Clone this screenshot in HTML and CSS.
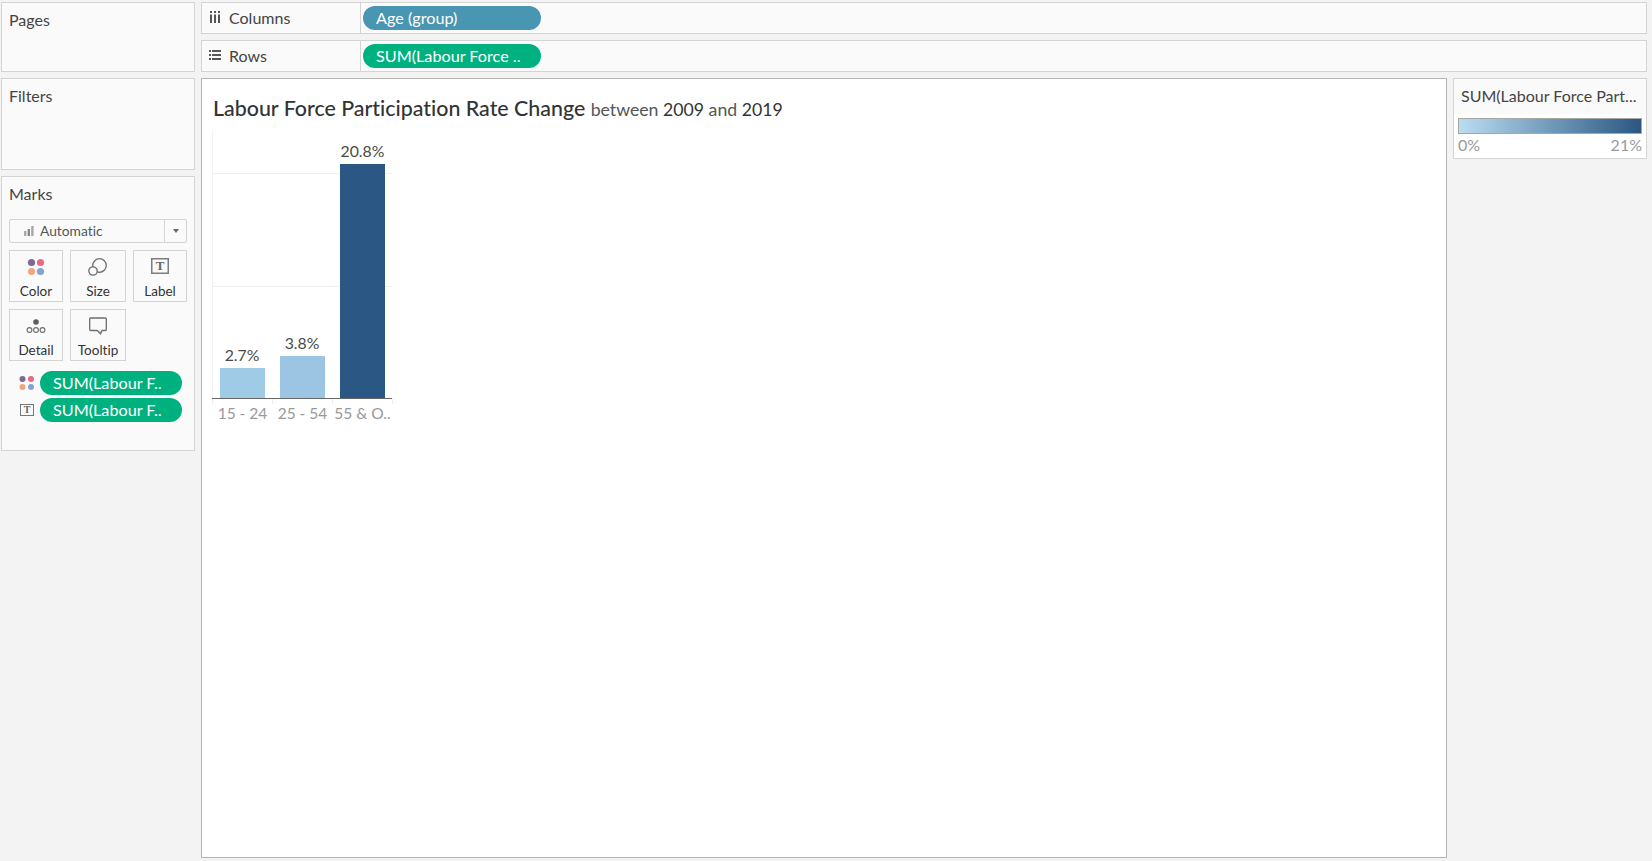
FILE: index.html
```html
<!DOCTYPE html>
<html lang="en">
<head>
    <meta charset="UTF-8">
    <title>Labour Force Participation Rate Change</title>
    <link rel="stylesheet" href="styles.css">
</head>
<body>
    <div class="app">
        <!-- Left side cards -->
        <div class="sidebar">
            <div class="panel pages-panel"><div class="panel-title">Pages</div></div>
            <div class="panel filters-panel"><div class="panel-title">Filters</div></div>
            <div class="panel marks-panel">
                <div class="panel-title">Marks</div>
                <div class="mark-type">
                    <div class="mark-type-name">
                        <svg class="mark-type-icon" width="12" height="10" viewBox="0 0 12 10">
                            <rect x="1" y="5" width="2.4" height="5" fill="#a8a8a8"/>
                            <rect x="4.6" y="3" width="2.4" height="7" fill="#8a8a8a"/>
                            <rect x="8.2" y="0" width="2.4" height="10" fill="#a8a8a8"/>
                        </svg>
                        Automatic
                    </div>
                    <div class="mark-type-arrow"><span class="arrow"></span></div>
                </div>
                <div class="mark-cards">
                    <div class="mark-card">
                        <svg width="18" height="18" viewBox="0 0 18 18">
                            <circle cx="4.5" cy="4.5" r="3.6" fill="#7b6a94"/>
                            <circle cx="13.5" cy="4.5" r="3.6" fill="#ea6a80"/>
                            <circle cx="4.5" cy="13.5" r="3.6" fill="#f2a67c"/>
                            <circle cx="13.5" cy="13.5" r="3.6" fill="#7fa6d0"/>
                        </svg>
                        <span>Color</span>
                    </div>
                    <div class="mark-card">
                        <svg width="20" height="18" viewBox="0 0 20 18">
                            <circle cx="11.5" cy="7.5" r="6.8" fill="none" stroke="#6d6d6d" stroke-width="1.3"/>
                            <circle cx="5" cy="13" r="4.2" fill="#fafafa" stroke="#6d6d6d" stroke-width="1.3"/>
                        </svg>
                        <span>Size</span>
                    </div>
                    <div class="mark-card">
                        <svg width="18" height="16" viewBox="0 0 18 16">
                            <rect x="0.75" y="0.75" width="16.5" height="14.5" fill="none" stroke="#7d7d7d" stroke-width="1.5"/>
                            <text x="9" y="12" class="t-glyph">T</text>
                        </svg>
                        <span>Label</span>
                    </div>
                    <div class="mark-card">
                        <svg width="20" height="18" viewBox="0 0 20 18">
                            <circle cx="10" cy="5" r="2.8" fill="#5f5f5f"/>
                            <circle cx="3.5" cy="13" r="2.4" fill="none" stroke="#6d6d6d" stroke-width="1.1"/>
                            <circle cx="10" cy="13" r="2.4" fill="none" stroke="#6d6d6d" stroke-width="1.1"/>
                            <circle cx="16.5" cy="13" r="2.4" fill="none" stroke="#6d6d6d" stroke-width="1.1"/>
                        </svg>
                        <span>Detail</span>
                    </div>
                    <div class="mark-card">
                        <svg width="18" height="18" viewBox="0 0 18 18">
                            <path d="M1.7 1h14.6a1 1 0 0 1 1 1v10.500a1 1 0 0 1-1 1H13l-1.500 3.300-3.200-3.300H1.700a1 1 0 0 1-1-1V2a1 1 0 0 1 1-1z" fill="none" stroke="#6d6d6d" stroke-width="1.3"/>
                        </svg>
                        <span>Tooltip</span>
                    </div>
                </div>
                <div class="mark-row">
                    <svg width="16" height="16" viewBox="0 0 16 16">
                        <circle cx="3.500" cy="4" r="3" fill="#7b6a94"/>
                        <circle cx="12" cy="4" r="3" fill="#ea6a80"/>
                        <circle cx="3.500" cy="12" r="3" fill="#f2a67c"/>
                        <circle cx="12" cy="12" r="3" fill="#7fa6d0"/>
                    </svg>
                    <div class="pill pill-green">SUM(Labour F..</div>
                </div>
                <div class="mark-row">
                    <svg width="14" height="12" viewBox="0 0 14 12">
                        <rect x="0.500" y="0.500" width="13" height="11" fill="none" stroke="#777" stroke-width="1"/>
                        <text x="7" y="9" class="t-glyph t-small">T</text>
                    </svg>
                    <div class="pill pill-green">SUM(Labour F..</div>
                </div>
            </div>
        </div>

        <div class="main">
            <!-- Shelves -->
            <div class="shelf">
                <div class="shelf-name">
                    <svg width="12" height="12" viewBox="0 0 12 12">
                        <path d="M1 0h2v2H1zM5 0h2v2H5zM9 0h2v2H9zM1 3.500h2V12H1zM5 3.500h2V12H5zM9 3.500h2V12H9z" fill="#555"/>
                    </svg>
                    Columns
                </div>
                <div class="shelf-pills"><div class="pill pill-blue">Age (group)</div></div>
            </div>
            <div class="shelf">
                <div class="shelf-name">
                    <svg width="12" height="12" viewBox="0 0 12 12">
                        <path d="M0 1h2v2H0zM3 1h9v2H3zM0 5h2v2H0zM3 5h9v2H3zM0 9h2v2H0zM3 9h9v2H3z" fill="#555"/>
                    </svg>
                    Rows
                </div>
                <div class="shelf-pills"><div class="pill pill-green">SUM(Labour Force ..</div></div>
            </div>

            <div class="content">
                <div class="canvas">
                    <h1 class="chart-title">Labour Force Participation Rate Change <small>between <b>2009</b> and <b>2019</b></small></h1>
                    <svg class="chart" width="200" height="300" viewBox="0 0 200 300">
                        <path d="M0.500 0V271M0 42.500H180M0 155.500H180" stroke="#f0f0f0" fill="none"/>
                        <rect x="8" y="237" width="45" height="30" fill="#a0cbe6"/>
                        <rect x="68" y="225" width="45" height="42" fill="#9bc5e3"/>
                        <rect x="128" y="33" width="45" height="234" fill="#2a5783"/>
                        <path d="M0 267.500H180" stroke="#666" fill="none"/>
                        <path d="M0.500 268V273M60.500 268V273M120.500 268V273M180.500 268V273" stroke="#ececec" fill="none"/>
                        <text class="bar-label" x="30" y="229.500">2.7%</text>
                        <text class="bar-label" x="90" y="217.500">3.8%</text>
                        <text class="bar-label" x="150.500" y="26">20.8%</text>
                        <text class="axis-label" x="30.500" y="288">15 - 24</text>
                        <text class="axis-label" x="90.500" y="288">25 - 54</text>
                        <text class="axis-label" x="150.500" y="288">55 &amp; O..</text>
                    </svg>
                </div>
                <div class="legend">
                    <div class="legend-title">SUM(Labour Force Part...</div>
                    <div class="legend-body">
                        <div class="legend-ramp"></div>
                        <div class="legend-range"><span>0%</span><span>21%</span></div>
                    </div>
                </div>
            </div>
        </div>
    </div>
</body>
</html>
```

FILE: styles.css
```css
* {
    margin: 0;
    padding: 0;
    box-sizing: border-box;
}

body {
    font-family: 'Lato', sans-serif;
    font-size: 15px;
    font-variant-ligatures: none;
    color: #444;
    background-color: #F3F3F3;
    height: 861px;
    overflow: hidden;
}

.app {
    display: flex;
    gap: 6px;
    height: 861px;
    padding: 2px 5px 3px 1px;
}

/* Left cards */
.sidebar {
    width: 194px;
    display: flex;
    flex-direction: column;
    gap: 6px;
}

.panel {
    background-color: #FAFAFA;
    border: 1px solid #D4D4D4;
    padding: 0 7px;
}

.panel-title {
    font-size: 16px;
    line-height: 20px;
    padding-top: 7px;
}

.pages-panel {
    height: 70px;
}

.filters-panel {
    height: 92px;
}

.marks-panel {
    height: 275px;
}

.mark-type {
    display: flex;
    height: 24px;
    margin-top: 15px;
    border: 1px solid #D4D4D4;
    border-radius: 2px;
    background-color: #FAFAFA;
}

.mark-type-name {
    flex: 1;
    display: flex;
    align-items: center;
    gap: 5px;
    padding-left: 13px;
    padding-bottom: 1px;
    font-size: 13.800px;
    color: #555;
}

.mark-type-arrow {
    width: 22px;
    border-left: 1px solid #D4D4D4;
    display: flex;
    align-items: center;
    justify-content: center;
}

.arrow {
    width: 0;
    height: 0;
    border-left: 3.500px solid transparent;
    border-right: 3.500px solid transparent;
    border-top: 4px solid #666;
}

.mark-cards {
    display: grid;
    grid-template-columns: 54px 56px 54px;
    grid-auto-rows: 52px;
    gap: 7px;
    margin-top: 7px;
}

.mark-card {
    border: 1px solid #D4D4D4;
    display: flex;
    flex-direction: column;
    align-items: center;
    justify-content: space-between;
    padding: 7px 0 1px;
    font-size: 13.500px;
    line-height: 18px;
    color: #333;
}

.mark-row {
    display: flex;
    align-items: center;
    height: 24px;
    margin-top: 3px;
    padding-left: 10px;
}

.mark-cards + .mark-row {
    margin-top: 10px;
}

.mark-row svg {
    width: 16px;
    margin-right: 5px;
    flex-shrink: 0;
}

.mark-row .pill {
    width: 142px;
}

.t-glyph {
    font-family: 'Liberation Serif', serif;
    font-size: 13px;
    font-weight: bold;
    fill: #666;
    text-anchor: middle;
}

.t-small {
    font-size: 10px;
}

/* Pills */
.pill {
    height: 24px;
    line-height: 24px;
    border-radius: 12px;
    color: #fff;
    font-size: 16.200px;
    padding-left: 13px;
    white-space: nowrap;
    overflow: hidden;
}

.pill-green {
    background-color: #00B180;
}

.pill-blue {
    background-color: #4996B2;
}

/* Shelves */
.main {
    flex: 1;
    display: flex;
    flex-direction: column;
    gap: 6px;
    min-width: 0;
}

.shelf {
    display: flex;
    height: 32px;
    background-color: #FAFAFA;
    border: 1px solid #D4D4D4;
}

.shelf-name {
    width: 159px;
    border-right: 1px solid #D4D4D4;
    display: flex;
    align-items: center;
    gap: 8px;
    padding-left: 7px;
    padding-bottom: 2px;
    font-size: 16px;
}

.shelf-pills {
    flex: 1;
    padding: 3px 2px;
}

.shelf-pills .pill {
    width: 178px;
}

/* Chart area */
.content {
    flex: 1;
    display: flex;
    gap: 6px;
}

.canvas {
    width: 1246px;
    background-color: #fff;
    border: 1px solid #B4B4B4;
    padding: 15px 11px;
}

.chart-title {
    font-size: 21.400px;
    font-weight: 500;
    line-height: 28px;
    color: #333;
}

.chart-title small {
    font-size: 17.700px;
    font-weight: 400;
    color: #555;
}

.chart-title small b {
    font-weight: 400;
    color: #333;
}

.chart {
    display: block;
    margin-top: 7px;
    margin-left: -1px;
    overflow: visible;
}

.bar-label {
    font-size: 15.800px;
    fill: #4a4a4a;
    text-anchor: middle;
}

.axis-label {
    font-size: 15.500px;
    fill: #999;
    text-anchor: middle;
}

/* Legend */
.legend {
    width: 194px;
    height: 81px;
    background-color: #fff;
    border: 1px solid #D4D4D4;
}

.legend-title {
    height: 35px;
    line-height: 33px;
    padding-left: 7px;
    background-color: #FAFAFA;
    font-size: 16px;
    white-space: nowrap;
}

.legend-body {
    padding: 4px 4px 0;
}

.legend-ramp {
    height: 16px;
    border: 1px solid #A8A8A0;
    background: linear-gradient(to right, #B9DDF1, #2A5783);
}

.legend-range {
    display: flex;
    justify-content: space-between;
    font-size: 16px;
    line-height: 22px;
    color: #999;
}
```
